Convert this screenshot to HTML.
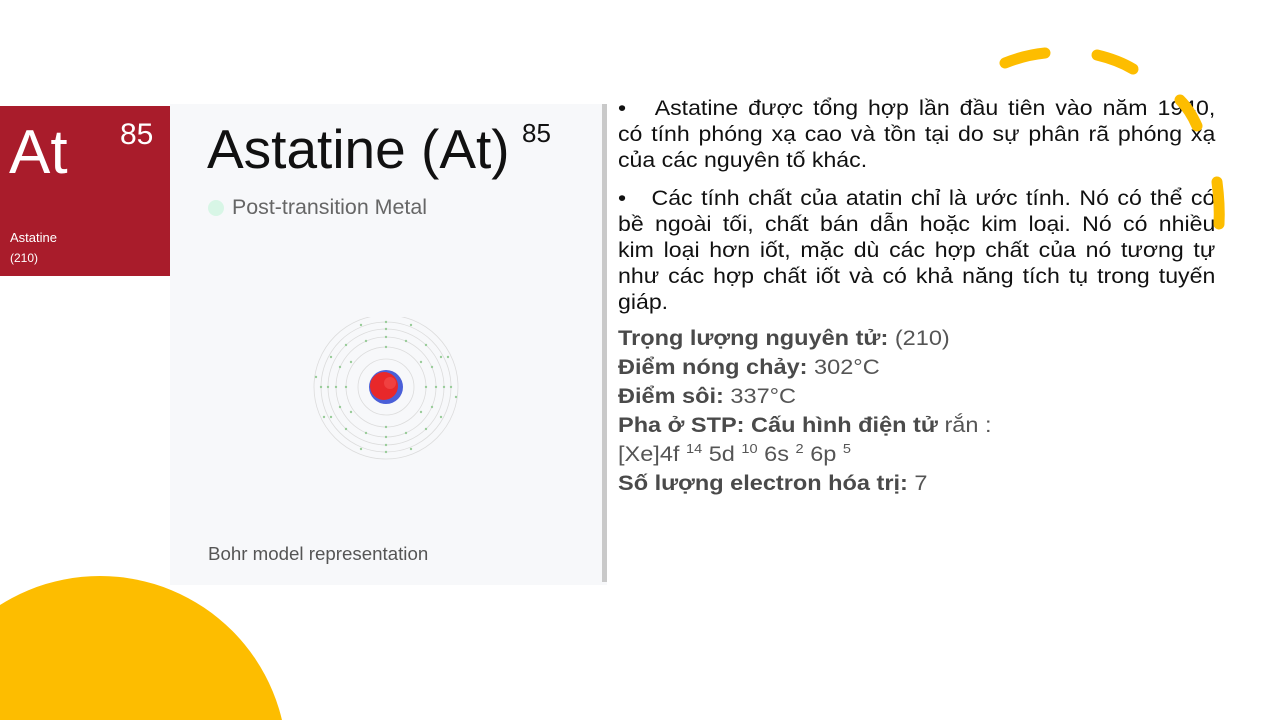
<!DOCTYPE html>
<html><head><meta charset="utf-8"><style>
html,body{margin:0;width:1280px;height:720px;overflow:hidden}
body{background:#fff;position:relative;font-family:"Liberation Sans",sans-serif}
.abs{position:absolute}
.txt{left:618px;width:543px;font-size:21px;color:#111;line-height:26px;transform:scaleX(1.1);transform-origin:0 0}
.txt div{text-align:justify;text-align-last:justify;white-space:nowrap}
.txt div.l{text-align-last:left}
.info{left:618px;top:324px;font-size:21px;color:#555;line-height:29px;transform:scaleX(1.12);transform-origin:0 0;white-space:nowrap}
.info b{color:#4a4a4a}
sup{font-size:13px;vertical-align:8px;line-height:0}
</style></head><body>
<svg class="abs" style="left:0;top:0" width="1280" height="720"><circle cx="100" cy="763" r="187" fill="#fdbd00"/></svg>
<div class="abs" style="left:170px;top:104px;width:437px;height:481px;background:#f7f8fa"></div>
<div class="abs" style="left:602px;top:104px;width:5px;height:478px;background:#c9c9c9"></div>
<div class="abs" style="left:0;top:106px;width:170px;height:170px;background:#a91c2b;color:#fff">
 <div class="abs" style="left:9px;top:12px;font-size:62px;line-height:70px">At</div>
 <div class="abs" style="left:120px;top:12px;font-size:30px;line-height:34px">85</div>
 <div class="abs" style="left:10px;top:124px;font-size:13px">Astatine</div>
 <div class="abs" style="left:10px;top:145px;font-size:12px">(210)</div>
</div>
<div class="abs" style="left:207px;top:115px;font-size:55px;line-height:68px;color:#111">Astatine (At)</div>
<div class="abs" style="left:522px;top:118px;font-size:26px;color:#111">85</div>
<div class="abs" style="left:208px;top:200px;width:16px;height:16px;border-radius:50%;background:#d8f6e6"></div>
<div class="abs" style="left:232px;top:195px;font-size:21.4px;color:#666">Post-transition Metal</div>
<div class="abs" style="left:208px;top:543px;font-size:18.7px;color:#555">Bohr model representation</div>
<svg class="abs" style="left:306px;top:317px" width="160" height="160" viewBox="0 0 160 160">
<g fill="none" stroke="#dcdcdc" stroke-width="0.8">
<circle cx="80" cy="70" r="28"/><circle cx="80" cy="70" r="40"/><circle cx="80" cy="70" r="50"/><circle cx="80" cy="70" r="58"/><circle cx="80" cy="70" r="65"/><circle cx="80" cy="70" r="72"/></g>
<g fill="#9c9" >
<circle cx="80" cy="30" r="1.2"/><circle cx="80" cy="110" r="1.2"/><circle cx="40" cy="70" r="1.2"/><circle cx="120" cy="70" r="1.2"/>
<circle cx="45" cy="45" r="1.2"/><circle cx="115" cy="95" r="1.2"/><circle cx="115" cy="45" r="1.2"/><circle cx="45" cy="95" r="1.2"/>
<circle cx="30" cy="70" r="1.2"/><circle cx="130" cy="70" r="1.2"/><circle cx="80" cy="20" r="1.2"/><circle cx="80" cy="120" r="1.2"/>
<circle cx="60" cy="24" r="1.2"/><circle cx="100" cy="24" r="1.2"/><circle cx="60" cy="116" r="1.2"/><circle cx="100" cy="116" r="1.2"/>
<circle cx="34" cy="50" r="1.2"/><circle cx="126" cy="50" r="1.2"/><circle cx="34" cy="90" r="1.2"/><circle cx="126" cy="90" r="1.2"/>
<circle cx="22" cy="70" r="1.2"/><circle cx="138" cy="70" r="1.2"/><circle cx="80" cy="12" r="1.2"/><circle cx="80" cy="128" r="1.2"/>
<circle cx="40" cy="28" r="1.2"/><circle cx="120" cy="28" r="1.2"/><circle cx="40" cy="112" r="1.2"/><circle cx="120" cy="112" r="1.2"/>
<circle cx="15" cy="70" r="1.2"/><circle cx="145" cy="70" r="1.2"/><circle cx="80" cy="5" r="1.2"/><circle cx="80" cy="135" r="1.2"/>
<circle cx="25" cy="40" r="1.2"/><circle cx="135" cy="40" r="1.2"/><circle cx="25" cy="100" r="1.2"/><circle cx="135" cy="100" r="1.2"/>
<circle cx="55" cy="8" r="1.2"/><circle cx="105" cy="8" r="1.2"/><circle cx="55" cy="132" r="1.2"/><circle cx="105" cy="132" r="1.2"/>
<circle cx="10" cy="60" r="1.2"/><circle cx="150" cy="80" r="1.2"/><circle cx="18" cy="100" r="1.2"/><circle cx="142" cy="40" r="1.2"/>
</g>
<circle cx="80" cy="70" r="17" fill="#4a5fd8"/>
<circle cx="78" cy="69" r="14" fill="#e8282a"/>
<circle cx="84" cy="66" r="6" fill="#f04040"/>
</svg>
<div class="abs txt" style="top:96px">
<div>•&nbsp;&nbsp; Astatine được tổng hợp lần đầu tiên vào năm 1940,</div>
<div>có tính phóng xạ cao và tồn tại do sự phân rã phóng xạ</div>
<div class="l">của các nguyên tố khác.</div>
</div>
<div class="abs txt" style="top:186px">
<div>•&nbsp;&nbsp; Các tính chất của atatin chỉ là ước tính. Nó có thể có</div>
<div>bề ngoài tối, chất bán dẫn hoặc kim loại. Nó có nhiều</div>
<div>kim loại hơn iốt, mặc dù các hợp chất của nó tương tự</div>
<div>như các hợp chất iốt và có khả năng tích tụ trong tuyến</div>
<div class="l">giáp.</div>
</div>
<div class="abs info"><b>Trọng lượng nguyên tử:</b> (210)<br><b>Điểm nóng chảy:</b> 302°C<br><b>Điểm sôi:</b> 337°C<br><b>Pha ở STP: Cấu hình điện tử</b> rắn :<br>[Xe]4f <sup>14</sup> 5d <sup>10</sup> 6s <sup>2</sup> 6p <sup>5</sup><br><b>Số lượng electron hóa trị:</b> 7</div>
<svg class="abs" style="left:0;top:0" width="1280" height="720"><g stroke="#fdbd00" stroke-width="11" stroke-linecap="round" fill="none">
<path d="M1005 63 Q1025 55 1045 53"/><path d="M1097 55 Q1118 60 1133 69"/><path d="M1180 100 Q1190 110 1197 126"/><path d="M1217 182 Q1220 205 1219 224"/></g></svg>
</body></html>
